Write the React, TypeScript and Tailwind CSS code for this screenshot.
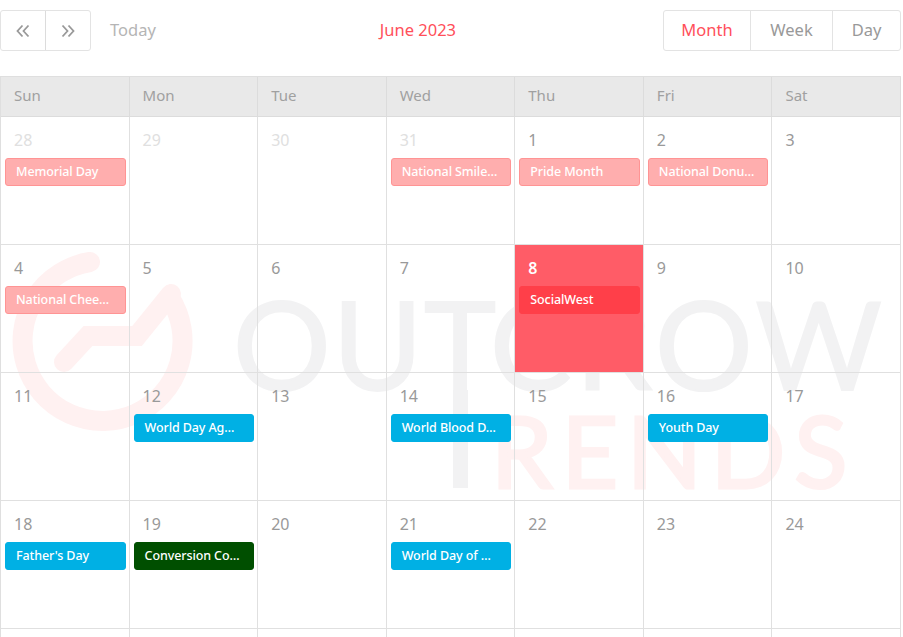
const weekDays = ["Sun", "Mon", "Tue", "Wed", "Thu", "Fri", "Sat"];

type CalEvent = { title: string; kind: "holiday" | "awareness" | "brand" | "conference" };

type Day = { label?: number; muted?: boolean; today?: boolean; event?: CalEvent };

const days: Day[] = [
  { label: 28, muted: true, event: { title: "Memorial Day", kind: "holiday" } },
  { label: 29, muted: true },
  { label: 30, muted: true },
  { label: 31, muted: true, event: { title: "National Smile…", kind: "holiday" } },
  { label: 1, event: { title: "Pride Month", kind: "holiday" } },
  { label: 2, event: { title: "National Donu…", kind: "holiday" } },
  { label: 3 },
  { label: 4, event: { title: "National Chee…", kind: "holiday" } },
  { label: 5 },
  { label: 6 },
  { label: 7 },
  { label: 8, today: true, event: { title: "SocialWest", kind: "brand" } },
  { label: 9 },
  { label: 10 },
  { label: 11 },
  { label: 12, event: { title: "World Day Ag…", kind: "awareness" } },
  { label: 13 },
  { label: 14, event: { title: "World Blood D…", kind: "awareness" } },
  { label: 15 },
  { label: 16, event: { title: "Youth Day", kind: "awareness" } },
  { label: 17 },
  { label: 18, event: { title: "Father's Day", kind: "awareness" } },
  { label: 19, event: { title: "Conversion Co…", kind: "conference" } },
  { label: 20 },
  { label: 21, event: { title: "World Day of …", kind: "awareness" } },
  { label: 22 },
  { label: 23 },
  { label: 24 },
  // last row is cut off by the window, only its borders show
  {},
  {},
  {},
  {},
  {},
  {},
  {},
];

const eventStyles = {
  holiday: "bg-[#ffaeae] border-[#ff9494]",
  awareness: "bg-[#00b0e4] border-[#00b0e4]",
  brand: "bg-[#ff3f49] border-[#ff3f49]",
  conference: "bg-[#004f00] border-[#004f00]",
};

function DoubleChevron({ direction }: { direction: "left" | "right" }) {
  return (
    <svg width="14" height="14" viewBox="0 0 14 14" fill="none" stroke="#999999" strokeWidth="1.8">
      {direction === "left" ? (
        <path d="M6.5 1.5 1.5 7l5 5.5M12.5 1.5 7.5 7l5 5.5" />
      ) : (
        <path d="M1.5 1.5 6.5 7l-5 5.5M7.5 1.5 12.5 7l-5 5.5" />
      )}
    </svg>
  );
}

function Watermark() {
  return (
    <div className="pointer-events-none absolute inset-0 overflow-hidden font-['Lato',sans-serif] whitespace-nowrap">
      <svg className="absolute left-0 top-[240px]" width="210" height="210" viewBox="0 0 210 210" fill="none" stroke="#fff1f1" strokeWidth="20" strokeLinecap="round">
        <path d="M90 22A80 80 0 1 0 170 58" />
        <path d="M64 122 88 96H137L171 54" strokeLinejoin="miter" />
      </svg>
      <div className="absolute left-[233px] top-[273px] text-[122px] leading-[140px] tracking-[2px] text-[#f2f2f3] [-webkit-text-stroke:2px_#f2f2f3]">OU</div>
      <div className="absolute left-[424px] top-[273px] text-[122px] leading-[140px] text-[#f2f2f3] [-webkit-text-stroke:2px_#f2f2f3]">T</div>
      <div className="absolute left-[453px] top-[390px] h-[98px] w-[15px] bg-[#f2f2f3]" />
      <div className="absolute left-[490px] top-[273px] text-[122px] leading-[140px] tracking-[4px] text-[#f2f2f3] [-webkit-text-stroke:2px_#f2f2f3]">CROW</div>
      <div className="absolute left-[491px] top-[390px] text-[98px] leading-[120px] tracking-[9px] text-[#fff1f1] [-webkit-text-stroke:3px_#fff1f1]">RENDS</div>
    </div>
  );
}

export default function App() {
  return (
    <div className="relative h-[637px] w-[903px] overflow-hidden bg-white font-['Noto_Sans',sans-serif] text-[#999]">
      <Watermark />
      <div className="relative flex h-[76px] items-start justify-between pt-[10px] pr-[2px]">
        <div className="flex items-center">
          <div className="flex h-[41px] rounded-[3px] border border-[#e3e3e3]">
            <button className="flex w-[45px] items-center justify-center border-r border-[#dcdcdc]">
              <DoubleChevron direction="left" />
            </button>
            <button className="flex w-[44px] items-center justify-center">
              <DoubleChevron direction="right" />
            </button>
          </div>
          <button className="ml-[19px] text-[16.5px] text-[#b5b5b5]">Today</button>
        </div>
        <span className="ml-[17px] pt-[8px] text-[16.5px] leading-[24px] text-[#ff4f5a]">June 2023</span>
        <div className="flex h-[41px] rounded-[3px] border border-[#e3e3e3] text-[16.5px]">
          <button className="w-[87px] border-r border-[#e3e3e3] text-[#ff4f5a]">Month</button>
          <button className="w-[82px] border-r border-[#e3e3e3] text-[#999]">Week</button>
          <button className="w-[67px] text-[#999]">Day</button>
        </div>
      </div>

      <div className="relative w-[901px] border-l border-t border-[#dfdfdf]">
        <div className="grid h-[40px] grid-cols-7 bg-[#e9e9e9]">
          {weekDays.map((name) => (
            <div key={name} className="flex items-center border-r border-b border-[#dcdcdc] pb-[2px] pl-[13px] text-[15px] text-[#a0a0a0]">
              {name}
            </div>
          ))}
        </div>
        <div className="grid auto-rows-[128px] grid-cols-7">
          {days.map((day, i) => (
            <div
              key={i}
              className={`border-r border-b border-[#e0e0e0] ${day.today ? "bg-[#ff5c67]" : ""}`}
            >
              {day.label !== undefined && (
                <div
                  className={`pl-[13px] pt-[11px] text-[16px] leading-[24px] ${
                    day.today ? "font-semibold text-white" : day.muted ? "text-[#e0e0e0]" : "text-[#999]"
                  }`}
                >
                  {day.label}
                </div>
              )}
              {day.event && (
                <div
                  className={`ml-[4px] mr-[3px] mt-[6px] h-[28px] truncate rounded-[3px] border pl-[10px] text-[12.5px] leading-[25px] font-medium tracking-[-0.1px] text-white ${eventStyles[day.event.kind]}`}
                >
                  {day.event.title}
                </div>
              )}
            </div>
          ))}
        </div>
      </div>
    </div>
  );
}
